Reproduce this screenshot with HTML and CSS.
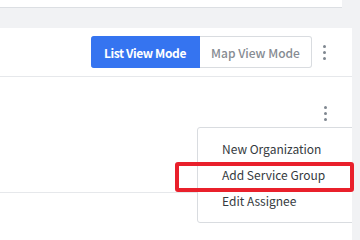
FILE: index.html
```html
<!DOCTYPE html>
<html>
<head>
<meta charset="utf-8">
<link rel="stylesheet" href="styles.css">
</head>
<body>
<div class="header"></div>
<div class="page">
  <div class="card">
    <div class="toolbar">
      <div class="modes">
        <button class="mode active">List View Mode</button>
        <button class="mode">Map View Mode</button>
      </div>
      <div class="kebab"><span></span><span></span><span></span></div>
    </div>
    <div class="row">
      <div class="kebab"><span></span><span></span><span></span></div>
    </div>
    <div class="menu">
      <div class="item">New Organization</div>
      <div class="item">Add Service Group</div>
      <div class="item">Edit Assignee</div>
    </div>
  </div>
</div>
<div class="highlight"></div>
</body>
</html>
```
FILE: styles.css
```css
* { box-sizing: border-box; }
html, body { margin: 0; padding: 0; }
body {
  width: 360px;
  height: 240px;
  overflow: hidden;
  background: #f1f2f4;
  font-family: "Noto Sans CJK KR", "Noto Sans", sans-serif;
  position: relative;
}
.header {
  width: 342px;
  height: 8px;
  background: #fff;
  border-bottom: 1px solid #dcdfe3;
}
.page {
  padding-top: 20px;
  width: 352px;
}
.card {
  position: relative;
  background: #fff;
  height: 212px;
  overflow: hidden;
}
.toolbar {
  height: 49px;
  border-bottom: 1px solid #e6e8eb;
  display: flex;
  justify-content: flex-end;
  align-items: flex-start;
  padding-top: 8px;
  padding-right: 16px;
}
.modes {
  display: flex;
  height: 32px;
}
.mode {
  font-family: inherit;
  font-size: 12px;
  height: 32px;
  border: 1px solid #d9dce0;
  background: #fff;
  color: #868b92;
  margin: 0;
  padding: 0;
  width: 112px;
  border-radius: 0 3px 3px 0;
  border-left: none;
  font-weight: 500;
}
.mode.active {
  width: 109px;
  background: #3574f0;
  border-color: #3574f0;
  color: #fff;
  font-weight: 700;
  letter-spacing: -0.4px;
  border-radius: 3px 0 0 3px;
}
.kebab {
  width: 24px;
  height: 32px;
  display: flex;
  flex-direction: column;
  align-items: center;
  justify-content: center;
  gap: 3px;
}
.kebab span {
  width: 3px;
  height: 3px;
  border-radius: 50%;
  background: #7f8790;
}
.row {
  height: 116px;
  border-bottom: 1px solid #e6e8eb;
  display: flex;
  justify-content: flex-end;
  padding-top: 20px;
  padding-right: 15px;
}
.menu {
  position: absolute;
  left: 197px;
  top: 99px;
  width: 170px;
  background: #fff;
  border: 1px solid #d9dce0;
  border-radius: 3px;
  padding: 8px 0;
}
.item {
  height: 26px;
  line-height: 26px;
  padding-left: 24px;
  font-size: 12px;
  color: #353a40;
  white-space: nowrap;
}
.highlight {
  position: absolute;
  left: 175px;
  top: 162px;
  width: 179px;
  height: 30px;
  border: 4px solid #e9202b;
  border-radius: 3px;
}
```
